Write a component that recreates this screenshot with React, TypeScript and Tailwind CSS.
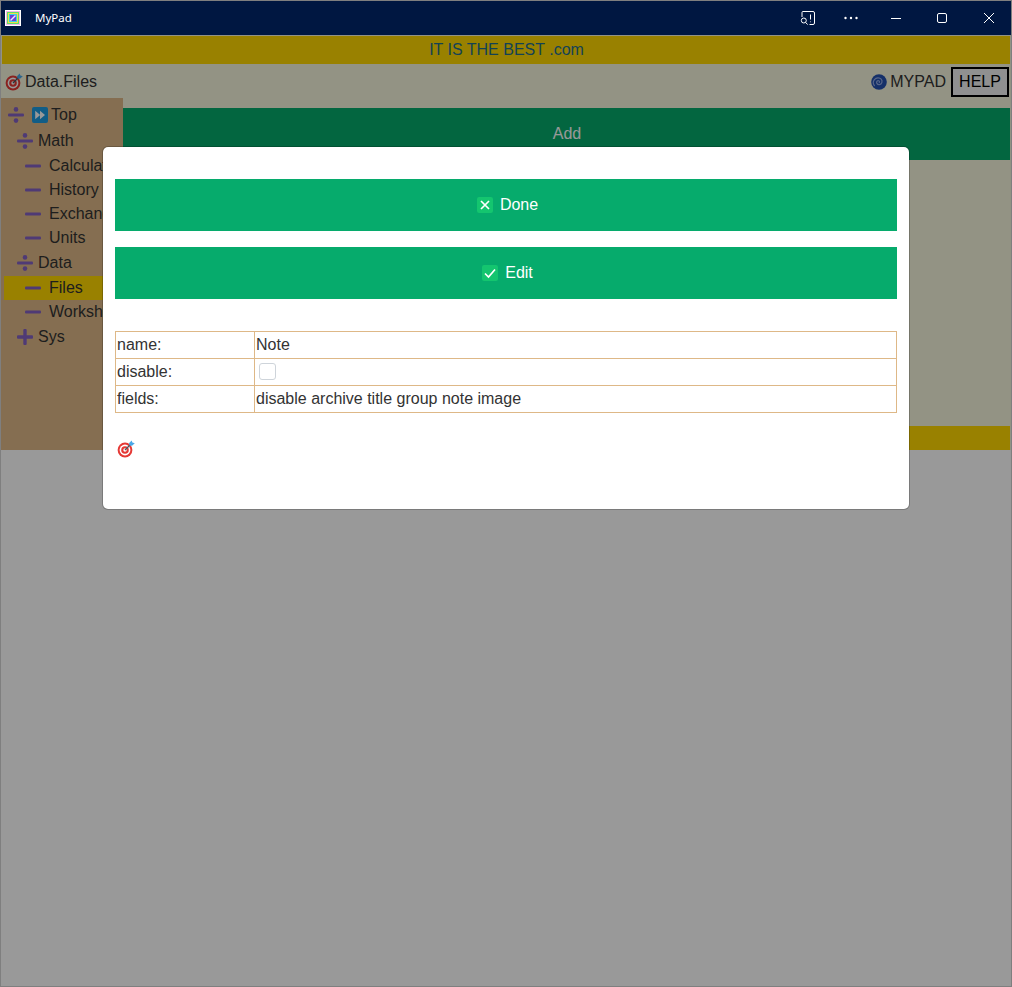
import React from "react";

const Target = ({ className = "" }: { className?: string }) => (
  <svg viewBox="0 0 18 18" width="18" height="18" className={className}>
    <circle cx="8" cy="10" r="7.4" fill="#e53935" />
    <circle cx="8" cy="10" r="5.4" fill="#fff" />
    <circle cx="8" cy="10" r="3.8" fill="#e53935" />
    <circle cx="8" cy="10" r="1.7" fill="#fff" />
    <path d="M8 10 L14 4" stroke="#455a64" strokeWidth="1.2" />
    <path d="M12 3.2 L14.6 0.4 L15.4 2.6 L17.8 3.2 L15 5.8 L12.6 5.4 Z" fill="#4aa8e8" />
  </svg>
);

const Divide = () => (
  <svg viewBox="0 0 16 16" width="16" height="16" className="shrink-0">
    <rect x="0" y="6.5" width="16" height="3" rx="1" fill="#8462c4" />
    <circle cx="8" cy="2.4" r="2.3" fill="#8462c4" />
    <circle cx="8" cy="13.6" r="2.3" fill="#8462c4" />
  </svg>
);

const Minus = () => (
  <svg viewBox="0 0 16 16" width="16" height="16" className="shrink-0">
    <rect x="0" y="6.5" width="16" height="3" rx="1" fill="#8462c4" />
  </svg>
);

const Plus = () => (
  <svg viewBox="0 0 16 16" width="16" height="16" className="shrink-0">
    <rect x="0" y="6.3" width="16" height="3.4" rx="1" fill="#8462c4" />
    <rect x="6.3" y="0" width="3.4" height="16" rx="1" fill="#8462c4" />
  </svg>
);

const FastForward = () => (
  <svg viewBox="0 0 16 16" width="16" height="16" className="shrink-0">
    <rect width="16" height="16" rx="2" fill="#1d9be0" />
    <path d="M3.2 3.8 L8.2 8 L3.2 12.2 Z M8 3.8 L13 8 L8 12.2 Z" fill="#fff" />
  </svg>
);

const Spiral = () => (
  <svg viewBox="0 0 16 16" width="16" height="16" className="shrink-0">
    <circle cx="8" cy="8" r="7.8" fill="#2450b0" />
    <path d="M8.2 8.4 C9.2 7.2 7.4 6 6.2 7 C4.8 8.3 6 10.8 8.4 10.6 C11 10.4 11.8 7 10.2 5.2 C8.6 3.4 5.2 3.4 3.4 5.6 C2 7.4 2.2 10 3.4 11.6" fill="none" stroke="#93abe4" strokeWidth="1.2" strokeLinecap="round" />
  </svg>
);

const AppIcon = () => (
  <svg viewBox="0 0 16 16" width="16" height="16">
    <rect width="16" height="16" fill="#fff" />
    <rect x="1" y="1" width="14" height="14" fill="#f3b5e6" />
    <rect x="2" y="2" width="12" height="12" fill="#5de06a" />
    <rect x="3" y="3" width="10" height="10" fill="#f0e04a" />
    <rect x="4" y="4" width="8" height="8" fill="#38d0e8" />
    <rect x="5" y="5" width="6" height="6" fill="#6c3fd8" />
    <path d="M5.5 10.5 L10.5 5.5" stroke="#e8e8ff" strokeWidth="1.4" />
  </svg>
);

const rows: { label: string; icon: React.ReactNode; pl: string; gap: string; active?: boolean; h: string }[] = [
  { label: "Math", icon: <Divide />, pl: "pl-[13px]", gap: "gap-[5px]", h: "h-[26px]" },
  { label: "Calculator", icon: <Minus />, pl: "pl-[21px]", gap: "gap-[8px]", h: "h-[24px]" },
  { label: "History", icon: <Minus />, pl: "pl-[21px]", gap: "gap-[8px]", h: "h-[24px]" },
  { label: "Exchange", icon: <Minus />, pl: "pl-[21px]", gap: "gap-[8px]", h: "h-[24px]" },
  { label: "Units", icon: <Minus />, pl: "pl-[21px]", gap: "gap-[8px]", h: "h-[24px]" },
  { label: "Data", icon: <Divide />, pl: "pl-[13px]", gap: "gap-[5px]", h: "h-[26px]" },
  { label: "Files", icon: <Minus />, pl: "pl-[21px]", gap: "gap-[8px]", h: "h-[24px]", active: true },
  { label: "Worksheet", icon: <Minus />, pl: "pl-[21px]", gap: "gap-[8px]", h: "h-[24px]" },
  { label: "Sys", icon: <Plus />, pl: "pl-[13px]", gap: "gap-[5px]", h: "h-[25px]" },
];

export default function App() {
  return (
    <div className="relative flex h-[987px] w-[1012px] flex-col overflow-hidden border border-[#7f7f7f] bg-white font-['Liberation_Sans',Arial,sans-serif] text-base text-[#333333]">
      {/* Window title bar */}
      <div className="relative z-20 flex h-[34px] shrink-0 items-center bg-[#001741] text-white">
        <div className="ml-[4px]"><AppIcon /></div>
        <span className="ml-[14px] font-['Noto_Sans',sans-serif] text-[11.5px]">MyPad</span>
        <div className="ml-auto flex items-center">
          <svg viewBox="0 0 16 16" width="16" height="16" className="mr-[27px]" fill="none" stroke="#fff" strokeWidth="1">
            <path d="M2 7 V2.5 A1 1 0 0 1 3 1.5 H13 A1.5 1.5 0 0 1 14.5 3 V13 A1.5 1.5 0 0 1 13 14.5 H9.5" />
            <circle cx="3.8" cy="10.5" r="2.5" />
            <path d="M5.6 12.4 L7.6 14.6 M10.5 4.5 V9.5 M10.5 11.5 V12.2" />
          </svg>
          <svg viewBox="0 0 16 16" width="16" height="16" className="mr-[31px]" fill="#fff">
            <circle cx="2.5" cy="8" r="1.2" /><circle cx="8" cy="8" r="1.2" /><circle cx="13.5" cy="8" r="1.2" />
          </svg>
          <svg viewBox="0 0 12 12" width="12" height="12" className="mr-[34px]" stroke="#fff" fill="none">
            <path d="M1 6.5 H11" />
          </svg>
          <svg viewBox="0 0 12 12" width="12" height="12" className="mr-[35px]" stroke="#fff" fill="none">
            <rect x="1.5" y="1.5" width="9" height="9" rx="1.5" />
          </svg>
          <svg viewBox="0 0 12 12" width="12" height="12" className="mr-[16px]" stroke="#fff" fill="none">
            <path d="M1 1 L11 11 M11 1 L1 11" />
          </svg>
        </div>
      </div>

      {/* Page under the dimmed overlay */}
      <div className="flex h-[415px] shrink-0 flex-col bg-[#f5f5dc]">
        <div className="mx-px mt-px flex h-[28px] shrink-0 items-center justify-center bg-[#ffd700] pl-[1px] text-[#1f6f8f]">
          IT IS THE BEST .com
        </div>
        <div className="flex h-[34px] shrink-0 items-center pt-[2px]">
          <Target className="ml-[4px]" />
          <span className="ml-[2px]">Data.Files</span>
          <div className="ml-auto flex items-center">
            <Spiral />
            <span className="ml-[3px] mr-[4px]">MYPAD</span>
            <button className="ml-px mr-[2px] h-[30px] w-[58px] border-2 border-black bg-[#f0f0f0] text-black">HELP</button>
          </div>
        </div>
        <div className="flex min-h-0 flex-1">
          <div className="w-[122px] shrink-0 overflow-hidden bg-[#deb887] pl-[3px] pt-[4px]">
            <div className="mb-px flex h-[25px] items-center whitespace-nowrap pl-[4px]">
              <Divide />
              <span className="ml-[8px]"><FastForward /></span>
              <span className="ml-[3px]">Top</span>
            </div>
            {rows.map((r) => (
              <div key={r.label} className={`flex items-center whitespace-nowrap ${r.h} ${r.pl} ${r.gap} ${r.active ? "bg-[#ffd700]" : ""}`}>
                {r.icon}
                <span>{r.label}</span>
              </div>
            ))}
          </div>
          <div className="flex min-w-0 flex-1 flex-col pt-[10px]">
            <div className="mr-px flex h-[52px] shrink-0 items-center justify-center bg-[#06ab6c] pl-px text-white">Add</div>
            <div className="flex-1" />
            <div className="mr-px h-[24px] shrink-0 bg-[#ffd700]" />
          </div>
        </div>
      </div>

      {/* Overlay */}
      <div className="absolute inset-x-0 bottom-0 top-[34px] z-10 bg-black/40" />

      {/* Modal */}
      <div className="absolute left-[101px] top-[145px] z-10 flex h-[364px] w-[808px] flex-col rounded-[6px] border border-black/20 bg-white bg-clip-padding px-[12px] pt-[32px]">
        <button className="flex h-[52px] shrink-0 items-center justify-center gap-[7px] bg-[#06ab6c] pl-[3px] text-white">
          <svg viewBox="0 0 16 16" width="16" height="16">
            <rect width="16" height="16" rx="2" fill="#14c56f" />
            <path d="M4 4 L12 12 M12 4 L4 12" stroke="#fff" strokeWidth="1.7" />
          </svg>
          <span>Done</span>
        </button>
        <button className="mt-[16px] flex h-[52px] shrink-0 items-center justify-center gap-[7px] bg-[#06ab6c] pl-[3px] text-white">
          <svg viewBox="0 0 16 16" width="16" height="16">
            <rect width="16" height="16" rx="2" fill="#14c56f" />
            <path d="M3 8.5 L6.5 12 L13 4.5" stroke="#fff" strokeWidth="1.7" fill="none" />
          </svg>
          <span>Edit</span>
        </button>
        <table className="mt-[32px] w-full border-collapse">
          <tbody>
            <tr className="h-[27px]">
              <td className="w-[139px] border border-[#deb887] px-px py-0">name:</td>
              <td className="border border-[#deb887] px-px py-0">Note</td>
            </tr>
            <tr className="h-[27px]">
              <td className="border border-[#deb887] px-px py-0">disable:</td>
              <td className="border border-[#deb887] py-0 pl-[4px]">
                <div className="mb-px h-[17px] w-[17px] rounded-[3px] border border-[#ced4da] bg-white" />
              </td>
            </tr>
            <tr className="h-[27px]">
              <td className="border border-[#deb887] px-px py-0">fields:</td>
              <td className="border border-[#deb887] px-px py-0">disable archive title group note image</td>
            </tr>
          </tbody>
        </table>
        <Target className="ml-[2px] mt-[27px]" />
      </div>
    </div>
  );
}
